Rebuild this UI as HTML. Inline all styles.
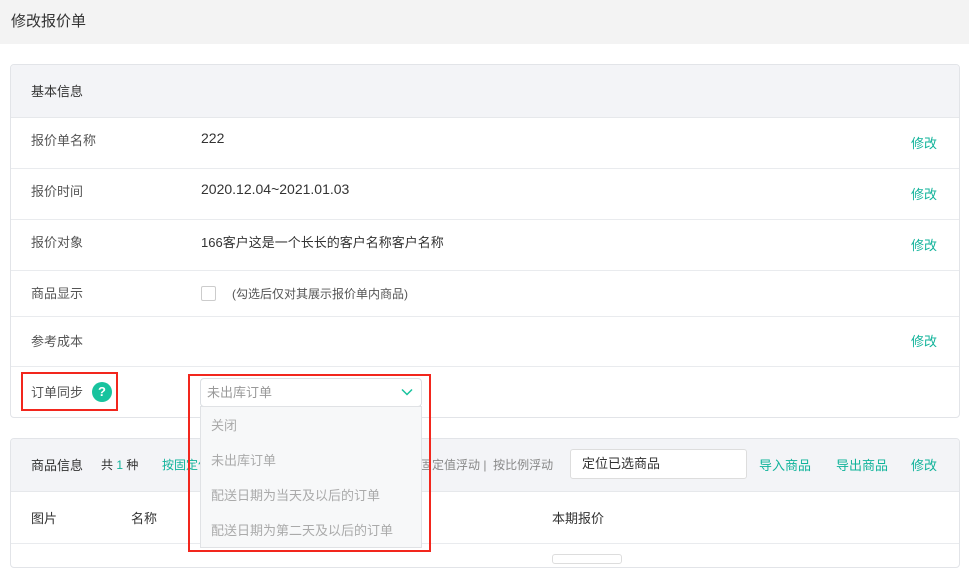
<!DOCTYPE html>
<html><head><meta charset="utf-8"><style>
*{margin:0;padding:0;box-sizing:border-box}
body{width:969px;height:557px;overflow:hidden;background:#fff;font-family:"Liberation Sans","Noto Sans CJK SC",sans-serif;font-size:13px;color:#333;position:relative}
.a{position:absolute;white-space:nowrap}
.top{left:0;top:0;width:969px;height:44px;background:#f3f3f3}
.card{border:1px solid #e2e4e8;border-radius:4px;background:#fff;overflow:hidden}
.hd{background:#f3f4f7;border-bottom:1px solid #e6e8eb}
.row{border-bottom:1px solid #e9ebee}
.lab{color:#555}
.g{color:#10b39a}
.red{border:2px solid #f2261d}
</style></head><body>
<div class="a top"></div>
<div class="a" style="left:11px;top:10px;font-size:15px;color:#333">修改报价单</div>

<div class="a card" style="left:10px;top:64px;width:950px;height:354px">
 <div class="a hd" style="left:0;top:0;width:950px;height:53px"></div>
 <div class="a row" style="left:0;top:53px;width:950px;height:51px"></div>
 <div class="a row" style="left:0;top:104px;width:950px;height:51px"></div>
 <div class="a row" style="left:0;top:155px;width:950px;height:51px"></div>
 <div class="a row" style="left:0;top:206px;width:950px;height:46px"></div>
 <div class="a row" style="left:0;top:252px;width:950px;height:50px"></div>
</div>
<div class="a" style="left:31px;top:81px">基本信息</div>
<div class="a lab" style="left:31px;top:130px">报价单名称</div>
<div class="a" style="left:201px;top:130px;font-size:14px">222</div>
<div class="a g" style="left:911px;top:133px">修改</div>
<div class="a lab" style="left:31px;top:181px">报价时间</div>
<div class="a" style="left:201px;top:181px;font-size:14px">2020.12.04~2021.01.03</div>
<div class="a g" style="left:911px;top:184px">修改</div>
<div class="a lab" style="left:31px;top:232px">报价对象</div>
<div class="a" style="left:201px;top:232px">166客户这是一个长长的客户名称客户名称</div>
<div class="a g" style="left:911px;top:235px">修改</div>
<div class="a lab" style="left:31px;top:283px">商品显示</div>
<div class="a" style="left:201px;top:286px;width:15px;height:15px;border:1px solid #ccc;border-radius:2px"></div>
<div class="a" style="left:232px;top:285px;font-size:12px;color:#555">(勾选后仅对其展示报价单内商品)</div>
<div class="a lab" style="left:31px;top:331px">参考成本</div>
<div class="a g" style="left:911px;top:331px">修改</div>

<div class="a red" style="left:21px;top:372px;width:97px;height:39px"></div>
<div class="a lab" style="left:31px;top:382px">订单同步</div>
<div class="a" style="left:92px;top:382px;width:20px;height:20px;border-radius:50%;background:#18c39e;color:#fff;font-weight:bold;font-size:13px;text-align:center;line-height:20px">?</div>

<div class="a card" style="left:10px;top:438px;width:950px;height:130px">
 <div class="a hd" style="left:0;top:0;width:950px;height:53px"></div>
 <div class="a row" style="left:0;top:53px;width:950px;height:52px"></div>
</div>
<div class="a" style="left:31px;top:455px">商品信息</div>
<div class="a" style="left:101px;top:456px;font-size:12px">共 <span class="g">1</span> 种</div>
<div class="a g" style="left:162px;top:456px;font-size:12px">按固定价</div>
<div class="a" style="left:420px;top:456px;font-size:12px;color:#888">固定值浮动 | &nbsp;按比例浮动</div>
<div class="a" style="left:570px;top:449px;width:177px;height:30px;border:1px solid #ddd;border-radius:3px;background:#fff;padding-left:11px;line-height:28px">定位已选商品</div>
<div class="a g" style="left:759px;top:455px">导入商品</div>
<div class="a g" style="left:836px;top:455px">导出商品</div>
<div class="a g" style="left:911px;top:455px">修改</div>
<div class="a" style="left:31px;top:508px">图片</div>
<div class="a" style="left:131px;top:508px">名称</div>
<div class="a" style="left:552px;top:508px">本期报价</div>
<div class="a" style="left:552px;top:554px;width:70px;height:10px;border:1px solid #ddd;border-radius:3px"></div>

<div class="a" style="left:200px;top:378px;width:222px;height:29px;border:1px solid #dcdfe3;border-radius:4px;background:#fff;padding-left:6px;line-height:27px;color:#999">未出库订单</div>
<svg class="a" style="left:401px;top:388px" width="12" height="8" viewBox="0 0 12 8"><path d="M1 1.5L6 6.5L11 1.5" fill="none" stroke="#18c39e" stroke-width="1.5"/></svg>
<div class="a" style="left:200px;top:406px;width:222px;height:142px;border:1px solid #e0e2e5;background:#f7f8f9"></div>
<div class="a" style="left:211px;top:415px;color:#aaa">关闭</div>
<div class="a" style="left:211px;top:450px;color:#aaa">未出库订单</div>
<div class="a" style="left:211px;top:485px;color:#aaa">配送日期为当天及以后的订单</div>
<div class="a" style="left:211px;top:520px;color:#aaa">配送日期为第二天及以后的订单</div>
<div class="a red" style="left:188px;top:374px;width:243px;height:178px"></div>
</body></html>
